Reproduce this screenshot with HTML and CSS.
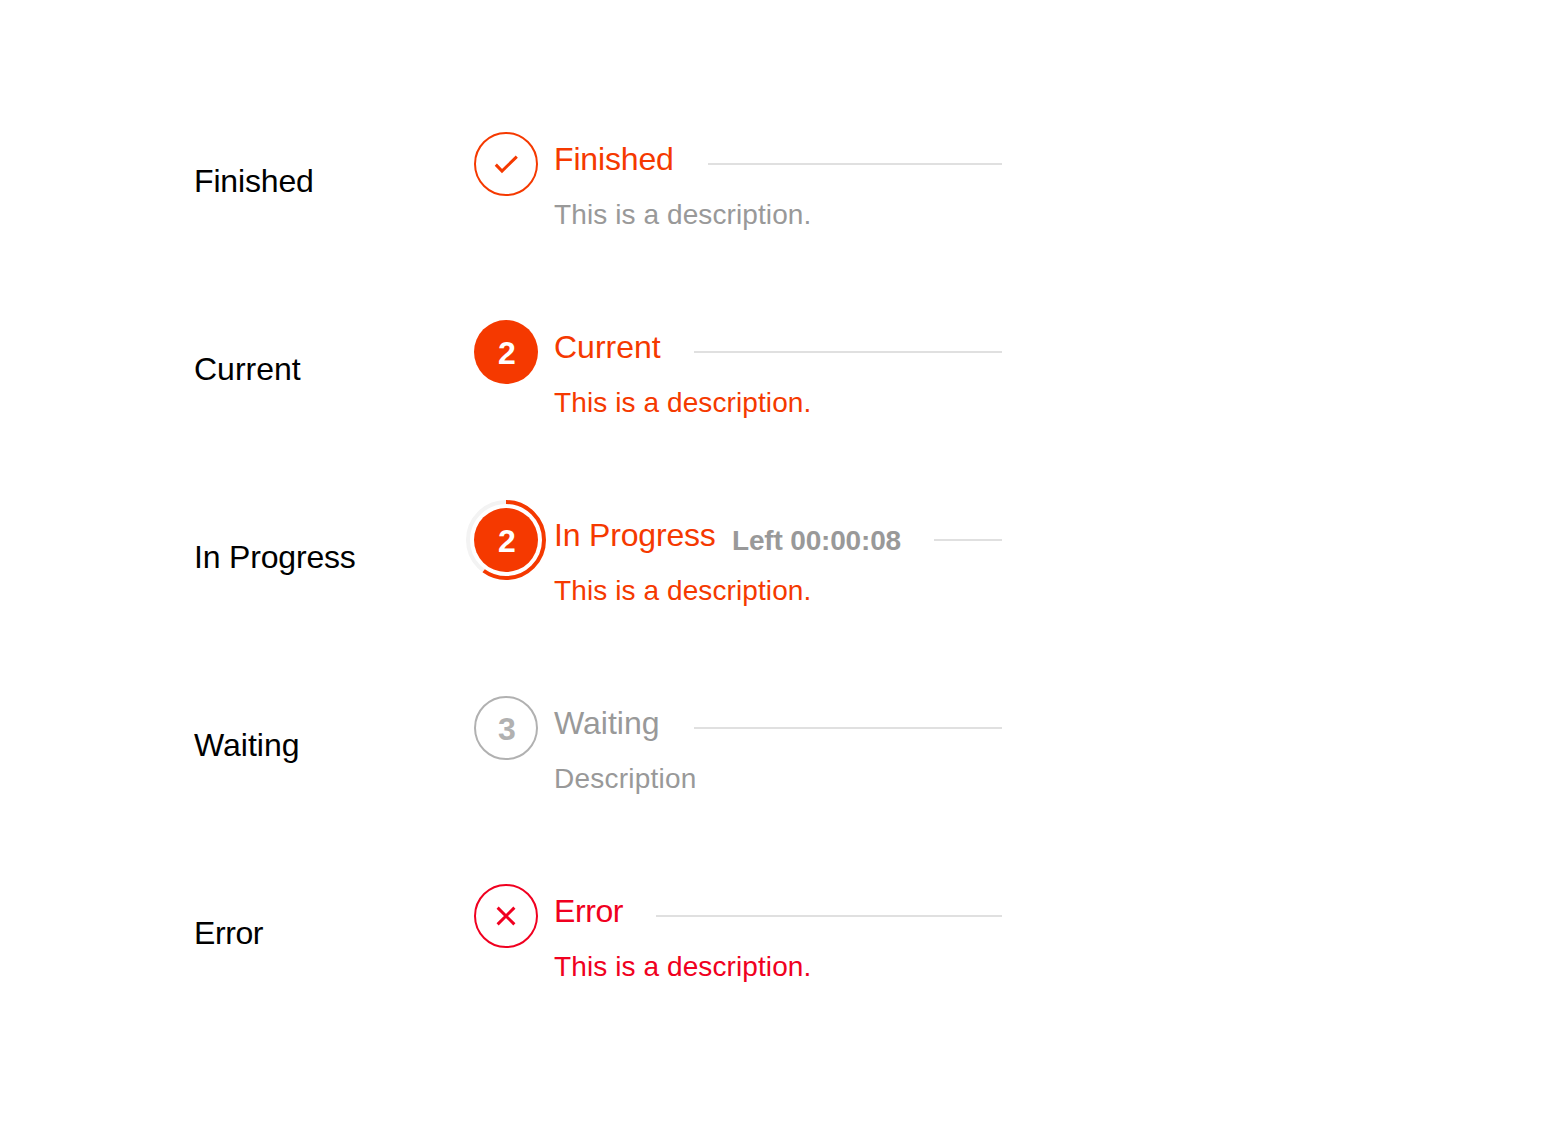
FILE: index.html
```html
<!DOCTYPE html>
<html lang="en">
<head>
<meta charset="utf-8">
<title>Step states</title>
<link rel="stylesheet" href="styles.css">
</head>
<body>
<main class="states">
  <section class="row finished">
    <div class="label">Finished</div>
    <div class="step">
      <div class="icon outline"><svg class="glyph" viewBox="0 0 64 64"><path d="M21.8 32.6 28 39.1 42.8 24.6"/></svg></div>
      <div class="content">
        <div class="head"><span class="title">Finished</span><span class="line"></span></div>
        <div class="desc">This is a description.</div>
      </div>
    </div>
  </section>
  <section class="row current">
    <div class="label">Current</div>
    <div class="step">
      <div class="icon solid"><span class="number">2</span></div>
      <div class="content">
        <div class="head"><span class="title">Current</span><span class="line"></span></div>
        <div class="desc">This is a description.</div>
      </div>
    </div>
  </section>
  <section class="row progress">
    <div class="label">In Progress</div>
    <div class="step">
      <div class="icon solid"><span class="number">2</span>
        <svg class="ring" viewBox="0 0 80 80"><circle class="track" cx="40" cy="40" r="38"/><circle class="arc" cx="40" cy="40" r="38" pathLength="100" transform="rotate(-90 40 40)"/></svg>
      </div>
      <div class="content">
        <div class="head"><span class="title">In Progress</span><span class="time">Left 00:00:08</span><span class="line"></span></div>
        <div class="desc">This is a description.</div>
      </div>
    </div>
  </section>
  <section class="row waiting">
    <div class="label">Waiting</div>
    <div class="step">
      <div class="icon outline"><span class="number">3</span></div>
      <div class="content">
        <div class="head"><span class="title">Waiting</span><span class="line"></span></div>
        <div class="desc">Description</div>
      </div>
    </div>
  </section>
  <section class="row error">
    <div class="label">Error</div>
    <div class="step">
      <div class="icon outline"><svg class="glyph" viewBox="0 0 64 64"><path d="M23.6 23.6 40.4 40.4M40.4 23.6 23.6 40.4"/></svg></div>
      <div class="content">
        <div class="head"><span class="title">Error</span><span class="line"></span></div>
        <div class="desc">This is a description.</div>
      </div>
    </div>
  </section>
</main>
</body>
</html>
```
FILE: styles.css
```css
* { box-sizing: border-box; }
body {
  margin: 0;
  background: #fff;
  color: #000;
  font-family: "Liberation Sans", Arial, sans-serif;
  font-size: 32px;
}
.states { padding: 132px 0 0 194px; }
.row {
  display: flex;
  width: 808px;
  height: 188px;
}
.label {
  width: 280px;
  padding-top: 27px;
  line-height: 44px;
}
.step {
  display: flex;
  flex: 1;
  gap: 16px;
  color: #f53900;
}
.icon {
  position: relative;
  display: flex;
  align-items: center;
  justify-content: center;
  flex: none;
  width: 64px;
  height: 64px;
  border-radius: 50%;
}
.outline { border: 2px solid currentColor; }
.solid { background: #f53900; color: #fff; }
.number {
  padding: 2px 0 0 2px;
  font-weight: 700;
  line-height: 44px;
}
.glyph {
  flex: none;
  width: 64px;
  height: 64px;
  fill: none;
  stroke: currentColor;
  stroke-width: 3;
}
.ring {
  position: absolute;
  top: -8px;
  left: -8px;
  width: 80px;
  height: 80px;
  fill: none;
  stroke-width: 4;
}
.track { stroke: #f3f3f3; }
.arc { stroke: #f53900; stroke-dasharray: 60 100; }
.content { flex: 1; padding-top: 5px; }
.head { display: flex; height: 56px; }
.title { width: 122px; line-height: 44px; white-space: nowrap; }
.current .title, .waiting .title { width: 108px; }
.progress .title { width: 162px; }
.error .title { width: 70px; }
.finished .label, .finished .title { letter-spacing: -0.16px; }
.progress .label, .progress .title { letter-spacing: -0.18px; }
.error .label, .error .title { letter-spacing: -0.4px; }
.time {
  width: 170px;
  margin-left: 16px;
  padding-top: 6px;
  color: #999;
  font-size: 28px;
  font-weight: 700;
  letter-spacing: -0.17px;
  line-height: 44px;
  white-space: nowrap;
}
.line {
  flex: 1;
  height: 2px;
  margin: 26px 0 0 32px;
  background: #e0e0e0;
}
.desc { font-size: 28px; letter-spacing: 0.1px; line-height: 44px; }
.waiting .desc { letter-spacing: 0.22px; }
.finished .desc, .waiting .step { color: #999; }
.waiting .icon { color: #b1b1b1; }
.error .step { color: #f00020; }
```
